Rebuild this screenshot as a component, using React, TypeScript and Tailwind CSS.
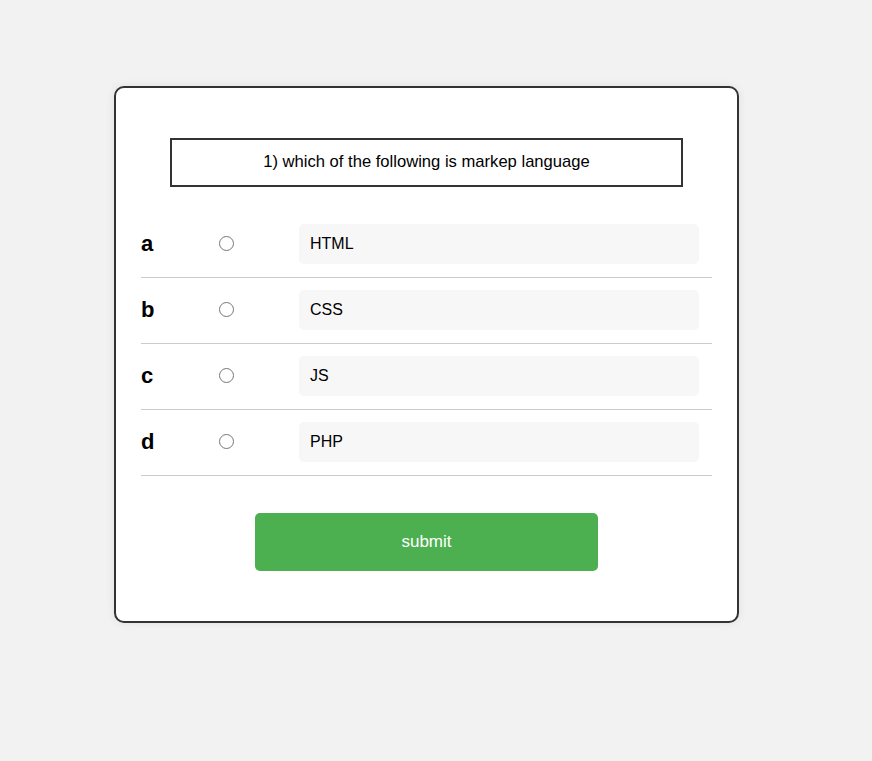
import React from "react";

const options = [
  { key: "a", text: "HTML" },
  { key: "b", text: "CSS" },
  { key: "c", text: "JS" },
  { key: "d", text: "PHP" },
];

export default function App() {
  return (
    <div
      className="min-h-[761px] w-full bg-[#f2f2f2] pt-[86px]"
      style={{ fontFamily: '"Liberation Sans", Arial, sans-serif' }}
    >
      <div className="ml-[114px] w-[625px] rounded-[10px] border-2 border-[#333] bg-white p-[25px] shadow-[0_0_10px_rgba(0,0,0,0.08)]">
        <div className="mx-auto mt-[25px] flex h-[49px] w-[90%] items-center justify-center border-2 border-[#333] pb-[1px] text-[16.6px] text-black">
          1) which of the following is markep language
        </div>
        <div className="mt-[25px]">
          {options.map((o) => (
            <div
              key={o.key}
              className="flex items-center border-b border-[#ccc] pt-[12px] pb-[13px]"
            >
              <div className="w-[78px] text-[22px] font-bold leading-none text-black">
                {o.key}
              </div>
              <div className="flex w-[80px] items-center pb-[2px]">
                <input type="radio" name="q" className="m-0 h-[15px] w-[15px]" />
              </div>
              <div className="flex h-[40px] w-[400px] items-center rounded-[5px] bg-[#f7f7f7] pl-[11px] text-[16px] text-black">
                {o.text}
              </div>
            </div>
          ))}
        </div>
        <button className="mx-auto mt-[37px] mb-[25px] flex h-[58px] w-[60%] items-center justify-center rounded-[5px] bg-[#4caf50] text-[17px] text-white">
          submit
        </button>
      </div>
    </div>
  );
}
